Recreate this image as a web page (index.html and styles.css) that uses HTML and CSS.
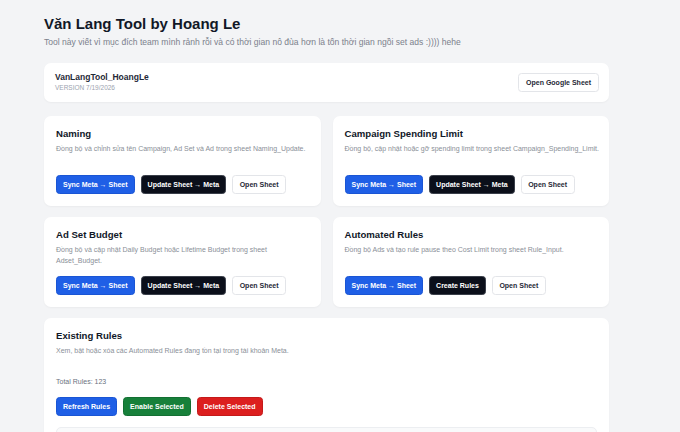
FILE: index.html
```html
<!DOCTYPE html>
<html lang="vi">
<head>
<meta charset="utf-8">
<title>Văn Lang Tool</title>
<link rel="stylesheet" href="styles.css">
</head>
<body>
<div class="page">
  <h1 class="title">Văn Lang Tool by Hoang Le</h1>
  <p class="subtitle">Tool này viết vì mục đích team mình rảnh rỗi và có thời gian nô đùa hơn là tốn thời gian ngồi set ads :)))) hehe</p>

  <div class="card header-card">
    <div class="app-info">
      <div class="app-name">VanLangTool_HoangLe</div>
      <div class="app-version">VERSION 7/19/2026</div>
    </div>
    <button class="btn btn-outline btn-wide">Open Google Sheet</button>
  </div>

  <div class="grid">
    <div class="card tool-card">
      <h2 class="card-title">Naming</h2>
      <p class="card-desc">Đồng bộ và chỉnh sửa tên Campaign, Ad Set và Ad trong sheet Naming_Update.</p>
      <div class="actions">
        <button class="btn btn-blue">Sync Meta → Sheet</button>
        <button class="btn btn-dark">Update Sheet → Meta</button>
        <button class="btn btn-outline">Open Sheet</button>
      </div>
    </div>
    <div class="card tool-card">
      <h2 class="card-title">Campaign Spending Limit</h2>
      <p class="card-desc">Đồng bộ, cập nhật hoặc gỡ spending limit trong sheet Campaign_Spending_Limit.</p>
      <div class="actions">
        <button class="btn btn-blue">Sync Meta → Sheet</button>
        <button class="btn btn-dark">Update Sheet → Meta</button>
        <button class="btn btn-outline">Open Sheet</button>
      </div>
    </div>
    <div class="card tool-card">
      <h2 class="card-title">Ad Set Budget</h2>
      <p class="card-desc">Đồng bộ và cập nhật Daily Budget hoặc Lifetime Budget trong sheet Adset_Budget.</p>
      <div class="actions">
        <button class="btn btn-blue">Sync Meta → Sheet</button>
        <button class="btn btn-dark">Update Sheet → Meta</button>
        <button class="btn btn-outline">Open Sheet</button>
      </div>
    </div>
    <div class="card tool-card">
      <h2 class="card-title">Automated Rules</h2>
      <p class="card-desc">Đồng bộ Ads và tạo rule pause theo Cost Limit trong sheet Rule_Input.</p>
      <div class="actions">
        <button class="btn btn-blue">Sync Meta → Sheet</button>
        <button class="btn btn-dark">Create Rules</button>
        <button class="btn btn-outline">Open Sheet</button>
      </div>
    </div>
  </div>

  <div class="card rules-card">
    <h2 class="card-title">Existing Rules</h2>
    <p class="card-desc">Xem, bật hoặc xóa các Automated Rules đang tồn tại trong tài khoản Meta.</p>
    <p class="total">Total Rules: 123</p>
    <div class="actions">
      <button class="btn btn-blue">Refresh Rules</button>
      <button class="btn btn-green">Enable Selected</button>
      <button class="btn btn-red">Delete Selected</button>
    </div>
    <div class="rules-list"></div>
  </div>
</div>
</body>
</html>
```

FILE: styles.css
```css
* { box-sizing: border-box; }

html, body {
  margin: 0;
  padding: 0;
  background: #f3f4f6;
  font-family: "Liberation Sans", Arial, sans-serif;
  color: #111827;
}

.page {
  padding: 15px 71px 0 44px;
}

.title {
  margin: 0;
  font-size: 15px;
  line-height: 18px;
  font-weight: 700;
  color: #111827;
}

.subtitle {
  margin: 4px 0 0;
  font-size: 8.55px;
  line-height: 11px;
  color: #7b818c;
}

.card {
  background: #ffffff;
  border-radius: 7px;
  box-shadow: 0 1px 2px rgba(0, 0, 0, 0.04);
}

.header-card {
  margin-top: 15px;
  height: 39px;
  padding: 0 10px 0 11px;
  display: flex;
  align-items: center;
  justify-content: space-between;
}

.app-name {
  font-size: 8.5px;
  line-height: 11px;
  font-weight: 700;
  color: #1f2937;
}

.app-version {
  font-size: 6.5px;
  line-height: 10px;
  color: #9ca3af;
}

.grid {
  margin-top: 14px;
  display: grid;
  grid-template-columns: 1fr 1fr;
  gap: 11px 12px;
}

.tool-card, .rules-card {
  padding: 12px 8px 12px 12px;
  display: flex;
  flex-direction: column;
}

.card-title {
  margin: 0;
  font-size: 9.6px;
  line-height: 11px;
  font-weight: 700;
  color: #111827;
}

.card-desc {
  margin: 4px 0 0;
  min-height: 22px;
  font-size: 7px;
  line-height: 11px;
  color: #8a8f98;
}

.actions {
  margin-top: 10px;
  display: flex;
  gap: 6px;
}

.btn {
  height: 19px;
  padding: 0 6px;
  border-radius: 3.5px;
  font-family: "Liberation Sans", Arial, sans-serif;
  font-size: 7px;
  font-weight: 700;
  line-height: 1;
  border: 1px solid transparent;
  cursor: pointer;
  white-space: nowrap;
}

.btn-blue {
  background: #1f5fe6;
  border-color: #1a55d4;
  color: #ffffff;
}

.btn-dark {
  background: #0b0f1a;
  border-color: #3a3f4a;
  color: #ffffff;
}

.btn-outline {
  background: #ffffff;
  border-color: #e3e5e9;
  color: #1f2937;
  padding: 0 6.5px;
}

.btn-wide {
  padding: 0 7px;
}

.btn-green {
  background: #17803a;
  border-color: #136f32;
  color: #ffffff;
}

.btn-red {
  background: #dc1f1f;
  border-color: #c41a1a;
  color: #ffffff;
}

.rules-card {
  margin-top: 11px;
  padding-right: 12px;
  padding-bottom: 40px;
}

.total {
  margin: 9px 0 0;
  font-size: 7px;
  line-height: 11px;
  color: #6b7280;
}

.rules-list {
  margin-top: 11px;
  height: 60px;
  background: #f9fafb;
  border: 1px solid #eceef1;
  border-radius: 5px;
}
```
